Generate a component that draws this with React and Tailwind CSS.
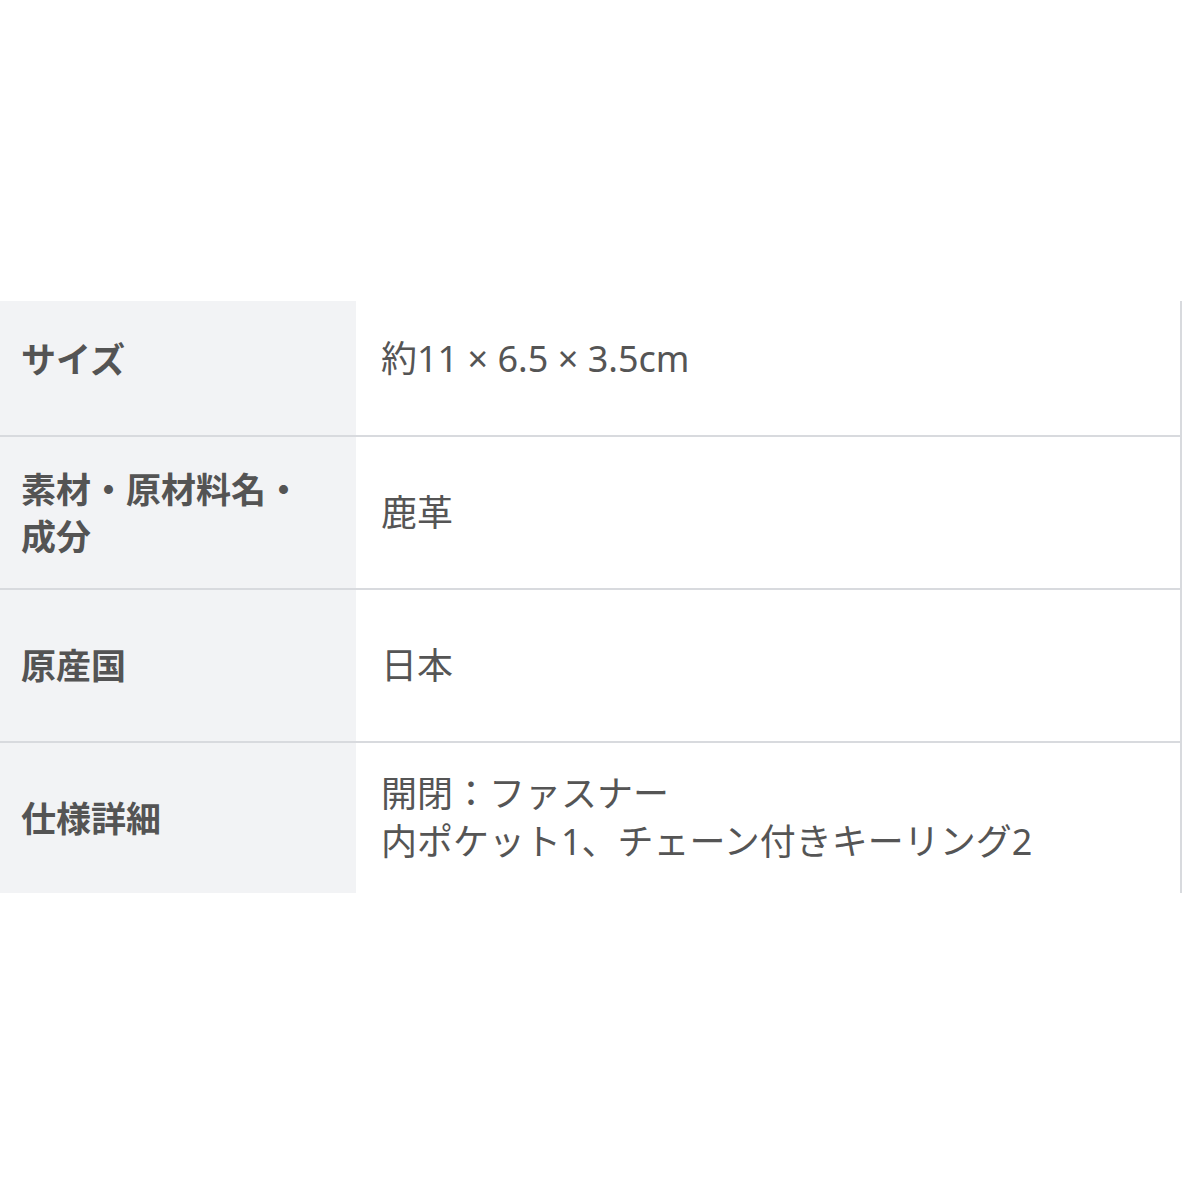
export default function App() {
  const rows = [
    { label: ["サイズ"], value: ["約11 × 6.5 × 3.5cm"], h: "h-[136px]", pad: "pb-[18px]" },
    { label: ["素材・原材料名・", "成分"], value: ["鹿革"], h: "h-[153px]", pad: "" },
    { label: ["原産国"], value: ["日本"], h: "h-[153px]", pad: "" },
    { label: ["仕様詳細"], value: ["開閉：ファスナー", "内ポケット1、チェーン付きキーリング2"], h: "h-[150px]", pad: "" },
  ];
  return (
    <div
      className="w-[1194px] h-[1194px] bg-white pt-[301px]"
      style={{ fontFamily: '"Noto Sans", "Noto Sans CJK JP", sans-serif' }}
    >
      <div className="w-[1182px] border-r-2 border-[#d8dade]">
        {rows.map((r, i) => (
          <div
            key={i}
            className={`flex ${r.h} ${i < rows.length - 1 ? "border-b-2 border-[#d8dade]" : ""}`}
          >
            <div className={`w-[356px] shrink-0 bg-[#f2f3f5] flex flex-col justify-center pl-[21px] ${r.pad} text-[35px] leading-[47px] font-bold text-[#545454]`}>
              {r.label.map((l, j) => (
                <div key={j} className="whitespace-nowrap">{l}</div>
              ))}
            </div>
            <div className={`flex-1 flex flex-col justify-center pl-[25px] ${r.pad} text-[36px] leading-[48px] text-[#555555]`}>
              {r.value.map((v, j) => (
                <div key={j} className="whitespace-nowrap">{v}</div>
              ))}
            </div>
          </div>
        ))}
      </div>
    </div>
  );
}
